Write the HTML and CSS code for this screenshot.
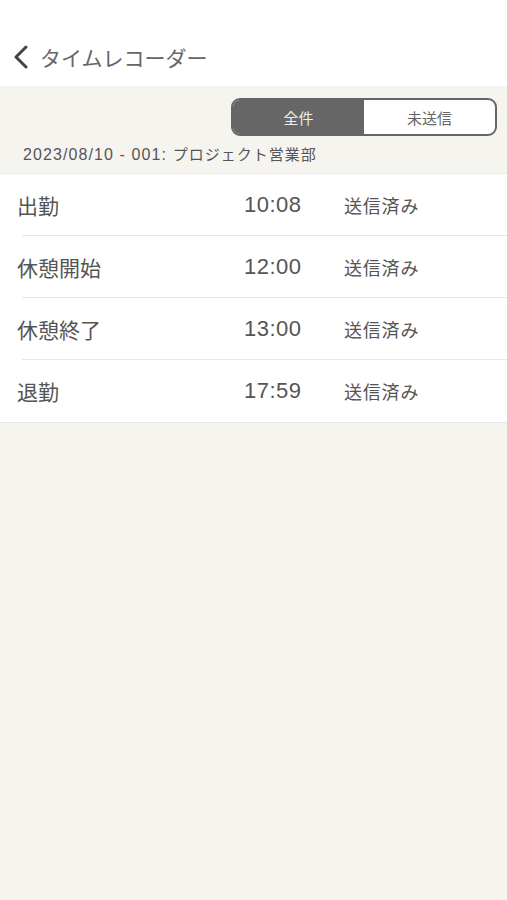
FILE: index.html
```html
<!DOCTYPE html>
<html lang="ja">
<head>
<meta charset="utf-8">
<link rel="stylesheet" href="styles.css">
</head>
<body>
<div class="app">
  <header class="nav">
    <svg class="back" width="16" height="24" viewBox="0 0 16 24"><path d="M13 2 L3 12 L13 22" fill="none" stroke="#444" stroke-width="3" stroke-linecap="round" stroke-linejoin="round"/></svg>
    <span class="title">タイムレコーダー</span>
  </header>
  <section class="filter">
    <div class="seg">
      <div class="seg-item active">全件</div>
      <div class="seg-item">未送信</div>
    </div>
    <div class="sub"><span class="sub-date">2023/08/10 - 001: </span><span class="sub-name">プロジェクト営業部</span></div>
  </section>
  <ul class="list">
    <li class="row"><span class="label">出勤</span><span class="time">10:08</span><span class="status">送信済み</span></li>
    <li class="row"><span class="label">休憩開始</span><span class="time">12:00</span><span class="status">送信済み</span></li>
    <li class="row"><span class="label">休憩終了</span><span class="time">13:00</span><span class="status">送信済み</span></li>
    <li class="row"><span class="label">退勤</span><span class="time">17:59</span><span class="status">送信済み</span></li>
  </ul>
</div>
</body>
</html>
```
FILE: styles.css
```css
* { box-sizing: border-box; }
html, body { margin: 0; padding: 0; }
body {
  background: #f5f4ef;
  font-family: "Noto Sans CJK JP", "Noto Sans", sans-serif;
  color: #555;
  width: 507px;
  height: 900px;
}
.app { display: flex; flex-direction: column; }
.nav {
  height: 86px;
  background: #fff;
  display: flex;
  align-items: center;
  padding: 28px 0 0 13px;
  gap: 11px;
}
.back { display: block; }
.title {
  font-size: 21px;
  color: #666;
}
.filter {
  padding: 12px 10px 0 0;
  height: 88px;
  border-bottom: 1px solid #ecebe6;
  display: flex;
  flex-direction: column;
  align-items: flex-end;
}
.seg {
  width: 266px;
  height: 38px;
  border: 2px solid #666;
  border-radius: 9px;
  display: flex;
  overflow: hidden;
  background: #fff;
}
.seg-item {
  flex: 1;
  display: flex;
  align-items: center;
  justify-content: center;
  font-size: 15px;
  color: #666;
}
.seg-item.active {
  background: #666;
  color: #eee;
}
.sub {
  align-self: flex-start;
  margin: 6px 0 0 23px;
  color: #555;
  line-height: 22px;
  white-space: nowrap;
}
.sub-date {
  font-family: "Liberation Sans", "Noto Sans", sans-serif;
  font-size: 16px;
  letter-spacing: 1.1px;
}
.sub-name {
  font-size: 15px;
  letter-spacing: 1px;
}
.list {
  list-style: none;
  margin: 0;
  padding: 0 0 0 22px;
  background: #fff;
  border-bottom: 1px solid #e8e7e2;
}
.row {
  height: 62px;
  display: flex;
  align-items: center;
  border-bottom: 1px solid #e6e6e6;
}
.row:last-child { border-bottom: none; }
.label {
  width: 227px;
  margin-left: -5px;
  font-size: 21px;
  color: #555;
}
.time {
  width: 100px;
  font-family: "Liberation Sans", "Noto Sans", sans-serif;
  font-size: 22px;
  letter-spacing: 0.5px;
  color: #555;
}
.status {
  font-size: 18px;
  letter-spacing: 0.8px;
  color: #555;
}
```
